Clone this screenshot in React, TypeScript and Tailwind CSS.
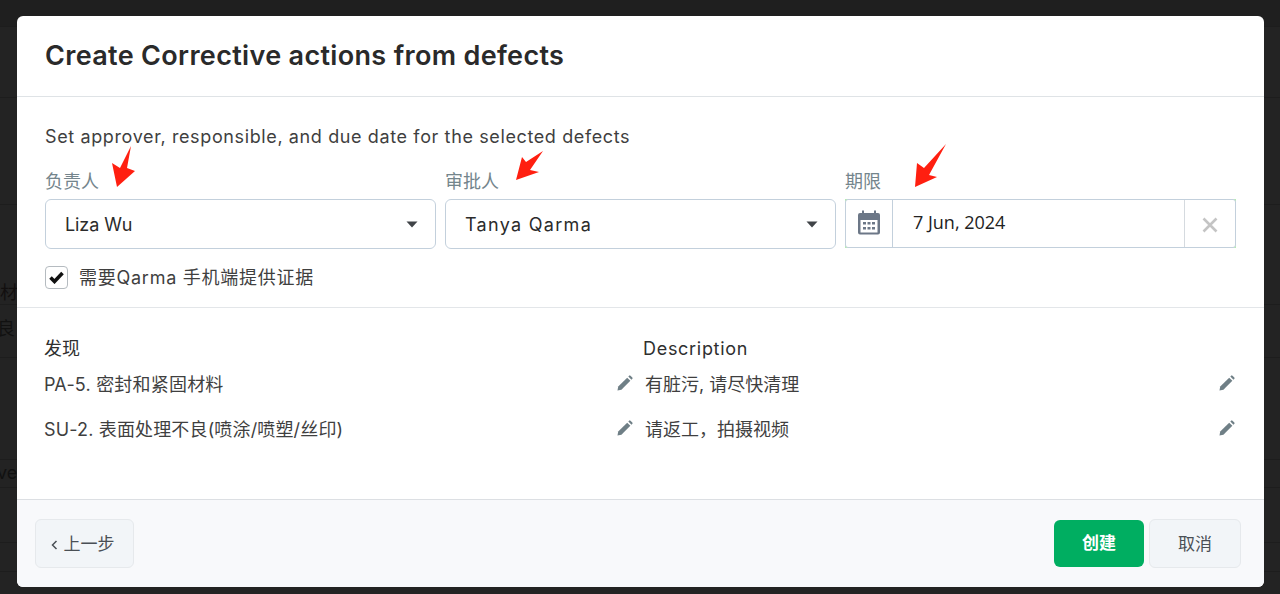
const font = { fontFamily: '"Inter","Noto Sans CJK SC",sans-serif' };

function Caret() {
  return (
    <svg width="12" height="7" viewBox="0 0 12 7" className="shrink-0">
      <path d="M0.500 0.500h11L6 6.500z" fill="#3f4347" />
    </svg>
  );
}

function Pencil() {
  return (
    <svg width="16" height="16" viewBox="0 0 17 17" className="shrink-0" fill="#6f7f86">
      <path d="M0.500 16.500l0.800-4.200L10.800 2.800l3.400 3.400L4.700 15.700z" />
      <path d="M12 1.600l0.900-0.900a1 1 0 0 1 1.400 0l2 2a1 1 0 0 1 0 1.400l-0.900 0.900z" />
    </svg>
  );
}

function Select({ value, tracking }: { value: string; tracking: string }) {
  return (
    <div className="flex h-[50px] w-[391px] items-center justify-between rounded-md border border-[#c3d0dc] bg-white pl-[19px] pr-[17px] text-[#2b2b2b]">
      <span className={`text-[18px] ${tracking}`}>{value}</span>
      <Caret />
    </div>
  );
}

function Field({ label, children }: { label: string; children: React.ReactNode }) {
  return (
    <div className="flex w-[391px] flex-col">
      <div className="h-[32px] pt-[2px] text-[18px] leading-[26px] text-[#74858c]">{label}</div>
      {children}
    </div>
  );
}

function Row({ left, right, tracking }: { left: string; right: string; tracking?: string }) {
  return (
    <div className="flex h-[45px] items-center text-[18px] text-[#3f3f3f]">
      <div className="flex w-[590px] items-center justify-between pr-[1px]">
        <span className={tracking}>{left}</span>
        <span className="-mt-[3px]"><Pencil /></span>
      </div>
      <div className="ml-[11px] flex w-[591px] items-center justify-between pr-[1px]">
        <span>{right}</span>
        <span className="-mt-[3px]"><Pencil /></span>
      </div>
    </div>
  );
}

const backdropRows = ["h-[27px] bg-[#1f1f1f]", "h-[71px]", "h-[107px]", "h-[100px]", "h-[53px]", "h-[102px]", "h-[28px]", "h-[55px]", "h-[29px]"];

export default function App() {
  return (
    <div className="relative h-[594px] w-[1280px] overflow-hidden bg-[#232323]" style={font}>
      <div className="flex flex-col">
        {backdropRows.map((r) => (
          <div key={r} className={`${r} border-b border-[#1d1d1d]`} />
        ))}
      </div>
      <div className="absolute left-0 top-[279px] text-[18px] text-[#120f0f]">材</div>
      <div className="absolute left-[-3px] top-[315px] text-[18px] text-[#111]">良</div>
      <div className="absolute left-[-3px] top-[459px] text-[18px] text-[#111]">ve</div>
      <div className="absolute left-[17px] top-[16px] flex h-[571px] w-[1247px] flex-col overflow-hidden rounded-md bg-white">
        <div className="flex h-[81px] items-center border-b border-[#dfe3e6] pl-[28px] pt-[1px] text-[27px] font-semibold tracking-[0.33px] text-[#2a2a2a]">
          Create Corrective actions from defects
        </div>
        <div className="flex h-[211px] flex-col border-b border-[#e3e6e9] pl-[28px] pt-[27px]">
          <div className="h-[43px] text-[18px] leading-[26px] tracking-[0.62px] text-[#3f3f3f]">Set approver, responsible, and due date for the selected defects</div>
          <div className="flex gap-[9px]">
            <Field label="负责人"><Select value="Liza Wu" tracking="tracking-[-0.1px]" /></Field>
            <Field label="审批人"><Select value="Tanya Qarma" tracking="tracking-[1.3px]" /></Field>
            <Field label="期限">
              <div className="h-[49px] w-[391px] bg-[#b4eeb0]">
                <div className="flex h-full items-stretch rounded-[3px] border border-[#c3d0dc] bg-white">
                  <div className="flex w-[47px] items-center justify-center border-r border-[#c3d0dc]">
                    <svg width="22" height="25" viewBox="0 0 22 25" fill="#6c7787" className="-mt-[2px]">
                      <path d="M4 0.500h2V3h10V0.500h2V3h2a2 2 0 0 1 2 2v17.500a2 2 0 0 1-2 2H2a2 2 0 0 1-2-2V5a2 2 0 0 1 2-2h2z" />
                      <rect x="2.500" y="10" width="17" height="12.500" fill="#fff" />
                      <path d="M5 12h3v2.500H5zM9.500 12h3v2.500h-3zM14 12h3v2.500h-3zM5 17h3v2.500H5zM9.500 17h3v2.500h-3zM14 17h3v2.500h-3z" />
                    </svg>
                  </div>
                  <div className="flex flex-1 items-center pb-[2px] pl-[20px] text-[18px] text-[#222]" style={{ fontFamily: '"Open Sans",sans-serif' }}>7 Jun, 2024</div>
                  <div className="flex w-[51px] items-center justify-center border-l border-[#d5dadf]">
                    <svg width="16" height="16" viewBox="0 0 16 16" stroke="#c4c4c4" strokeWidth="2.600" className="mt-[2px]">
                      <path d="M1.500 1.500l13 13M14.500 1.500l-13 13" />
                    </svg>
                  </div>
                </div>
              </div>
            </Field>
          </div>
          <div className="mt-[15px] flex items-center gap-[11px]">
            <div className="flex h-[23px] w-[23px] items-center justify-center rounded-[4px] border border-[#b5bbc0] bg-white">
              <svg width="15" height="13" viewBox="0 0 15 13"><path d="M1.500 6.500l4 4L13.500 2" fill="none" stroke="#111" strokeWidth="3.600" /></svg>
            </div>
            <span className="text-[18px] tracking-[0.75px] text-[#3f3f3f]">需要Qarma 手机端提供证据</span>
          </div>
        </div>
        <div className="flex flex-1 flex-col pl-[27px] pr-[28px] pt-[26px]">
          <div className="flex h-[28px] items-center text-[18px] text-[#2f2f2f]">
            <div className="w-[599px]">发现</div>
            <div className="tracking-[0.7px]">Description</div>
          </div>
          <Row left="PA-5. 密封和紧固材料" right="有脏污, 请尽快清理" tracking="tracking-[0.2px]" />
          <Row left="SU-2. 表面处理不良(喷涂/喷塑/丝印)" right="请返工，拍摄视频" tracking="tracking-[0.15px]" />
        </div>
        <div className="flex h-[88px] items-center justify-between border-t border-[#dcdfe3] bg-[#f8f9fb] pl-[18px] pr-[23px]">
          <div className="flex h-[49px] w-[99px] items-center justify-center gap-[6px] rounded-md border border-[#e6e9ec] bg-[#f2f5f8] pr-[4px] pt-[2px] text-[17px] text-[#4a4f55]">
            <svg width="7" height="10" viewBox="0 0 7 10" fill="none" stroke="#4a4f55" strokeWidth="1.500"><path d="M5.500 1L1.500 5l4 4" /></svg>
            上一步
          </div>
          <div className="flex items-center gap-[5px]">
            <div className="flex h-[47px] w-[90px] items-center justify-center rounded-md bg-[#00ae61] pt-[1px] text-[17px] font-semibold text-white">创建</div>
            <div className="flex h-[49px] w-[92px] items-center justify-center rounded-md border border-[#e6e9ec] bg-[#f2f5f8] pt-[2px] text-[17px] text-[#4a4f55]">取消</div>
          </div>
        </div>
      </div>
      <svg width="1280" height="594" viewBox="0 0 1280 594" className="absolute left-0 top-0" fill="#ff1f10">
        <path d="M131 146L127 168L135 171L117 187L112 163L120 168z" />
        <path d="M543 151L530 170L539 172L516 180L522 157L526 162z" />
        <path d="M946 144L929 175L937 177L915 187L917 163L924 168z" />
      </svg>
    </div>
  );
}
